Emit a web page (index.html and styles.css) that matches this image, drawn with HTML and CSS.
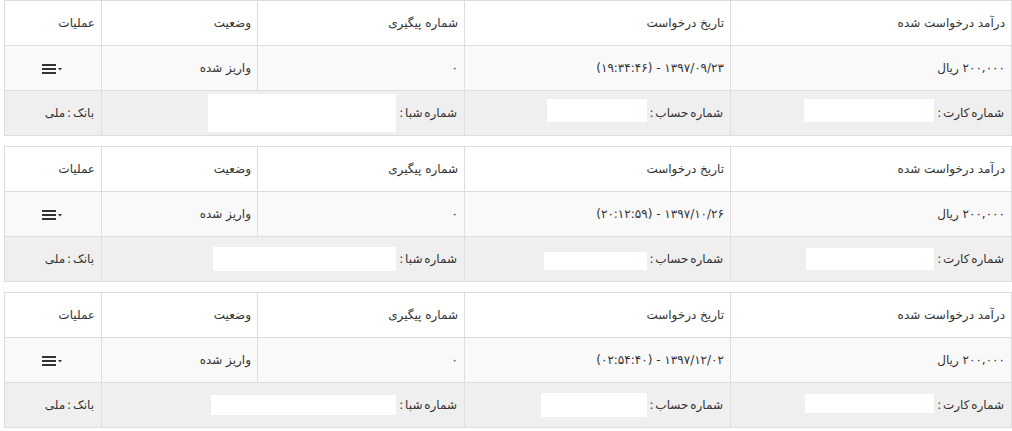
FILE: index.html
```html
<!DOCTYPE html>
<html lang="fa" dir="rtl">
<head>
<meta charset="utf-8">
<title>درخواست‌های برداشت</title>
<link rel="stylesheet" href="styles.css">
</head>
<body>
<div class="page">

  <table class="req">
    <colgroup><col class="c1"><col class="c2"><col class="c3"><col class="c4"><col class="c5"></colgroup>
    <thead>
      <tr><th>درآمد درخواست شده</th><th>تاریخ درخواست</th><th>شماره پیگیری</th><th>وضعیت</th><th>عملیات</th></tr>
    </thead>
    <tbody>
      <tr class="data">
        <td>۲۰۰,۰۰۰ ریال</td>
        <td>۱۳۹۷/۰۹/۲۳ - (۱۹:۳۴:۴۶)</td>
        <td>۰</td>
        <td>واریز شده</td>
        <td class="ops"><svg class="menu" width="22" height="12" viewBox="0 0 22 12"><rect x="0" y="1" width="14" height="2"/><rect x="0" y="5" width="14" height="2"/><rect x="0" y="9" width="14" height="2"/><polygon points="16,5 20,5 18,7.5"/></svg></td>
      </tr>
      <tr class="bank">
        <td><div class="field"><span class="lbl">شماره کارت :</span><span class="mask m-card-a"></span></div></td>
        <td><div class="field"><span class="lbl">شماره حساب :</span><span class="mask m-acc-a"></span></div></td>
        <td colspan="2"><div class="field"><span class="lbl">شماره شبا :</span><span class="mask m-sheba-a"></span></div></td>
        <td><span class="lbl">بانک : ملی</span></td>
      </tr>
    </tbody>
  </table>

  <table class="req">
    <colgroup><col class="c1"><col class="c2"><col class="c3"><col class="c4"><col class="c5"></colgroup>
    <thead>
      <tr><th>درآمد درخواست شده</th><th>تاریخ درخواست</th><th>شماره پیگیری</th><th>وضعیت</th><th>عملیات</th></tr>
    </thead>
    <tbody>
      <tr class="data">
        <td>۲۰۰,۰۰۰ ریال</td>
        <td>۱۳۹۷/۱۰/۲۶ - (۲۰:۱۲:۵۹)</td>
        <td>۰</td>
        <td>واریز شده</td>
        <td class="ops"><svg class="menu" width="22" height="12" viewBox="0 0 22 12"><rect x="0" y="1" width="14" height="2"/><rect x="0" y="5" width="14" height="2"/><rect x="0" y="9" width="14" height="2"/><polygon points="16,5 20,5 18,7.5"/></svg></td>
      </tr>
      <tr class="bank">
        <td><div class="field"><span class="lbl">شماره کارت :</span><span class="mask m-card-b"></span></div></td>
        <td><div class="field"><span class="lbl">شماره حساب :</span><span class="mask m-acc-b"></span></div></td>
        <td colspan="2"><div class="field"><span class="lbl">شماره شبا :</span><span class="mask m-sheba-b"></span></div></td>
        <td><span class="lbl">بانک : ملی</span></td>
      </tr>
    </tbody>
  </table>

  <table class="req">
    <colgroup><col class="c1"><col class="c2"><col class="c3"><col class="c4"><col class="c5"></colgroup>
    <thead>
      <tr><th>درآمد درخواست شده</th><th>تاریخ درخواست</th><th>شماره پیگیری</th><th>وضعیت</th><th>عملیات</th></tr>
    </thead>
    <tbody>
      <tr class="data">
        <td>۲۰۰,۰۰۰ ریال</td>
        <td>۱۳۹۷/۱۲/۰۲ - (۰۲:۵۴:۴۰)</td>
        <td>۰</td>
        <td>واریز شده</td>
        <td class="ops"><svg class="menu" width="22" height="12" viewBox="0 0 22 12"><rect x="0" y="1" width="14" height="2"/><rect x="0" y="5" width="14" height="2"/><rect x="0" y="9" width="14" height="2"/><polygon points="16,5 20,5 18,7.5"/></svg></td>
      </tr>
      <tr class="bank">
        <td><div class="field"><span class="lbl">شماره کارت :</span><span class="mask m-card-c"></span></div></td>
        <td><div class="field"><span class="lbl">شماره حساب :</span><span class="mask m-acc-c"></span></div></td>
        <td colspan="2"><div class="field"><span class="lbl">شماره شبا :</span><span class="mask m-sheba-c"></span></div></td>
        <td><span class="lbl">بانک : ملی</span></td>
      </tr>
    </tbody>
  </table>

</div>
</body>
</html>
```

FILE: styles.css
```css
html, body {
  margin: 0;
  padding: 0;
  background: #ffffff;
}

body {
  font-family: "DejaVu Sans", "Noto Sans", sans-serif;
  font-size: 12px;
  color: #333333;
}

.page {
  padding: 0 0 0 5px;
}

.req {
  width: 1007px;
  border-collapse: collapse;
  table-layout: fixed;
  margin: 0 0 10px 0;
  border: 1px solid #dddddd;
}

.c1 { width: 281px; }
.c2 { width: 266px; }
.c3 { width: 207px; }
.c4 { width: 156px; }
.c5 { width: 97px; }

.req th,
.req td {
  border: 1px solid #dddddd;
  height: 44px;
  padding: 0 6px;
  text-align: right;
  vertical-align: middle;
  font-weight: normal;
  white-space: nowrap;
  overflow: hidden;
}

.req thead tr { background: #ffffff; }
.req tr.data { background: #f9f9f9; }
.req tr.bank { background: #efefef; }

.req tr.bank td { padding: 0 7px; }

.req td.ops {
  text-align: center;
}

.menu {
  display: inline-block;
  vertical-align: middle;
  fill: #333333;
}

.field {
  display: flex;
  align-items: center;
  gap: 3px;
}

.lbl {
  word-spacing: -2px;
}

.mask {
  display: inline-block;
  background: #ffffff;
}

.m-card-a { width: 130px; height: 23px; margin-top: -6px; }
.m-acc-a { width: 100px; height: 23px; margin-top: -6px; }
.m-sheba-a { width: 188px; height: 38px; }

.m-card-b { width: 128px; height: 22px; }
.m-acc-b { width: 103px; height: 18px; margin-top: 4px; }
.m-sheba-b { width: 183px; height: 24px; }

.m-card-c { width: 129px; height: 19px; margin-top: -4px; }
.m-acc-c { width: 106px; height: 24px; }
.m-sheba-c { width: 185px; height: 20px; }
```
